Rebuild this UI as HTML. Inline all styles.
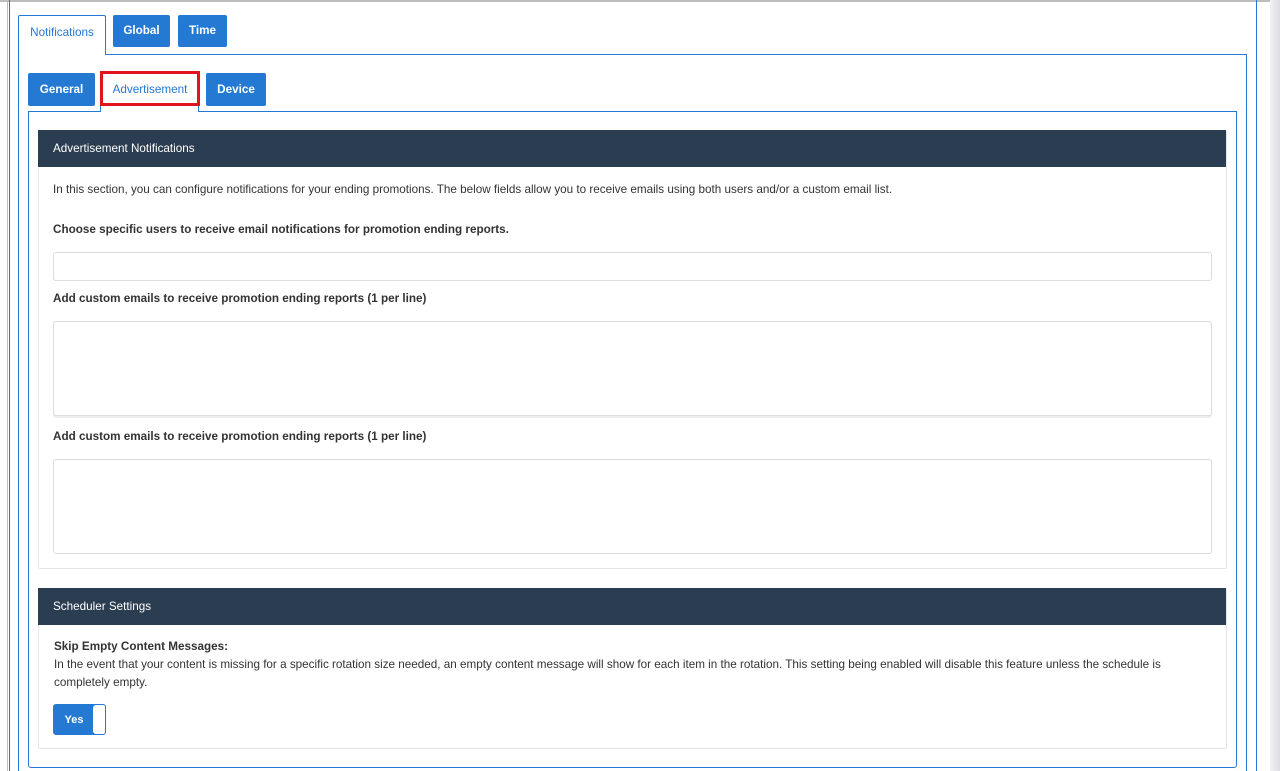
<!DOCTYPE html>
<html style="overflow:hidden;height:771px"><head><style>
*{box-sizing:border-box;margin:0;padding:0}
body{width:1280px;height:771px;overflow:hidden;background:#fff;font-family:"Liberation Sans",Arial,sans-serif;position:relative;color:#333;font-size:11.7px}
.a{position:absolute}
.btn{position:absolute;background:#2479d3;color:#fff;font-size:11.7px;font-weight:bold;text-align:center;border-radius:2px}
.lbl{position:absolute;font-size:11.7px;font-weight:bold;color:#333}
.inp{position:absolute;border:1px solid #dcdcdc;border-radius:3px;background:#fff}
.hdr{position:absolute;left:38px;width:1188px;height:37px;background:#2b3d51;color:#fff;font-size:11.7px;padding:12px 0 0 15px}
.pnl{position:absolute;left:38px;width:1189px;border:1px solid #e6e6e6;border-radius:2px}
</style></head><body>
<div class="a" style="left:0;top:0;width:1270px;height:2px;background:#bdbdbd"></div>
<div class="a" style="left:7px;top:0;width:1px;height:771px;background:#bdbdbd"></div>
<div class="a" style="left:1270px;top:0;width:10px;height:771px;background:linear-gradient(90deg,#f2f2f4,#dcdde3)"></div>
<div class="a" style="left:1256px;top:0;width:1px;height:771px;background:#2479d3"></div>
<div class="a" style="left:9px;top:0;width:1px;height:771px;background:#2479d3"></div>
<div class="a" style="left:18px;top:54px;width:1229px;height:730px;border:1px solid #2479d3"></div>
<div class="a" style="left:18px;top:15px;width:88px;height:40px;border:1px solid #2479d3;border-bottom:none;background:#fff;border-radius:2px 2px 0 0;color:#2479d3;font-size:11.7px;text-align:center;padding-top:10px">Notifications</div>
<div class="btn" style="left:113px;top:15px;width:57px;height:32px;line-height:32px">Global</div>
<div class="btn" style="left:178px;top:15px;width:49px;height:32px;line-height:32px">Time</div>
<div class="a" style="left:28px;top:111px;width:1209px;height:657px;border:1px solid #2479d3;border-radius:0 0 3px 3px"></div>
<div class="btn" style="left:28px;top:73px;width:67px;height:33px;line-height:33px">General</div>
<div class="a" style="left:100px;top:72px;width:99px;height:40px;border:1px solid #2479d3;border-bottom:none;background:#fff"></div>
<div class="a" style="left:100px;top:71px;width:100px;height:35px;border:3px solid #e0141c;color:#2479d3;font-size:11.7px;text-align:center;line-height:31px">Advertisement</div>
<div class="btn" style="left:206px;top:73px;width:60px;height:33px;line-height:33px">Device</div>
<div class="pnl" style="top:130px;height:439px"></div>
<div class="hdr" style="top:130px">Advertisement Notifications</div>
<div class="a" style="left:53px;top:183px;color:#333">In this section, you can configure notifications for your ending promotions. The below fields allow you to receive emails using both users and/or a custom email list.</div>
<div class="lbl" style="left:53px;top:223px">Choose specific users to receive email notifications for promotion ending reports.</div>
<div class="inp" style="left:53px;top:252px;width:1159px;height:29px"></div>
<div class="lbl" style="left:53px;top:292px">Add custom emails to receive promotion ending reports (1 per line)</div>
<div class="inp" style="left:53px;top:321px;width:1159px;height:95px;box-shadow:0 2px 0 #eee"></div>
<div class="lbl" style="left:53px;top:430px">Add custom emails to receive promotion ending reports (1 per line)</div>
<div class="inp" style="left:53px;top:459px;width:1159px;height:95px"></div>
<div class="pnl" style="top:588px;height:161px"></div>
<div class="hdr" style="top:588px">Scheduler Settings</div>
<div class="lbl" style="left:54px;top:640px">Skip Empty Content Messages:</div>
<div class="a" style="left:54px;top:656px;width:1150px;line-height:18px;color:#333">In the event that your content is missing for a specific rotation size needed, an empty content message will show for each item in the rotation. This setting being enabled will disable this feature unless the schedule is completely empty.</div>
<div class="a" style="left:53px;top:704px;width:53px;height:31px;border:1px solid #2479d3;border-radius:3px;background:#2479d3;overflow:hidden">
<div class="a" style="left:0;top:0;width:40px;height:29px;color:#fff;font-size:11px;font-weight:bold;text-align:center;line-height:31px">Yes</div>
<div class="a" style="left:39px;top:0;width:13px;height:29px;background:#fff;border-radius:3px"></div>
</div>
</body></html>
